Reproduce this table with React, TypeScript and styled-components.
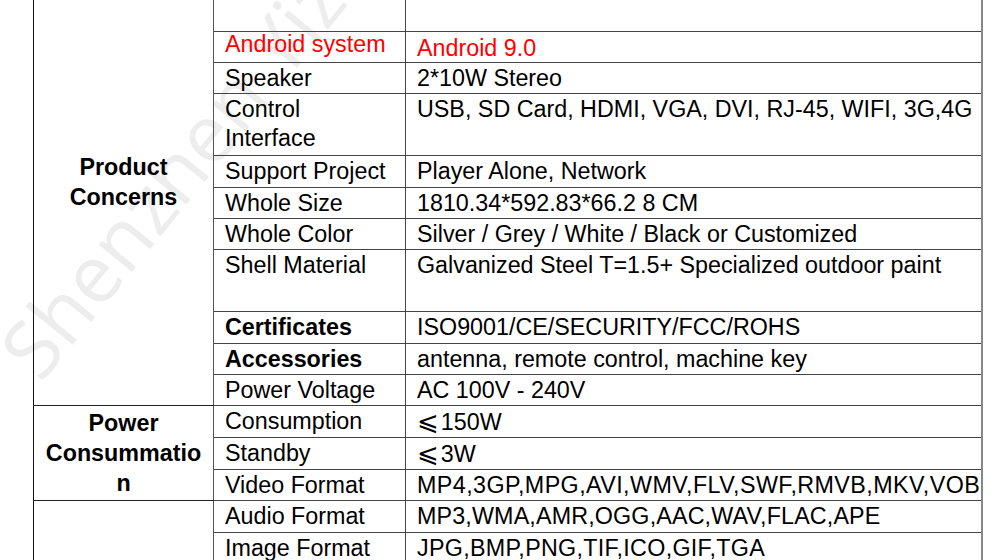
import React from "react";
import styled, { createGlobalStyle } from "styled-components";

const Global = createGlobalStyle`
  html, body { margin: 0; padding: 0; background: #fff; }
  body { width: 1000px; height: 560px; overflow: hidden; position: relative; }
`;

const Page = styled.div`
  position: relative;
  width: 1000px;
  height: 560px;
  overflow: hidden;
  background: #fff;
  font-family: "Liberation Sans", Arial, sans-serif;
`;

const Watermark = styled.div`
  position: absolute;
  left: -26px;
  top: 330px;
  transform: rotate(-51deg);
  transform-origin: 0 0;
  font-family: "Open Sans", "Liberation Sans", sans-serif;
  font-size: 80px;
  color: #ededed;
  white-space: nowrap;
  pointer-events: none;
  z-index: 0;
`;

const Table = styled.table`
  position: relative;
  z-index: 1;
  margin: -41px 0 0 33px;
  border-collapse: collapse;
  table-layout: fixed;
  width: 950px;
  font-size: 23.3px;
  line-height: 29px;
  color: #000;
  background: transparent;
`;

const Row = styled.tr<{ $h: number }>`
  height: ${(p) => p.$h}px;
`;

const GroupCell = styled.td`
  border-left: 1px solid #111;
  border-right: 1px solid #555;
  border-bottom: 1px solid #222;
  text-align: center;
  vertical-align: middle;
  font-weight: bold;
  line-height: 30px;
  padding: 0 4px;
`;

const LabelCell = styled.td<{ $bold?: boolean; $red?: boolean }>`
  border: 1px solid #444;
  border-left: 1px solid #555;
  vertical-align: top;
  padding: 1px 4px 0 11px;
  line-height: ${(p) => (p.$red ? "22px" : "29px")};
  font-weight: ${(p) => (p.$bold ? "bold" : "normal")};
  color: ${(p) => (p.$red ? "#ff0000" : "#000")};
  white-space: nowrap;
  overflow: hidden;
`;

const ValueCell = styled.td<{ $red?: boolean; $track?: number }>`
  border: 1px solid #444;
  border-right: 2px solid #888;
  vertical-align: top;
  padding: ${(p) => (p.$red ? "3px" : "1px")} 0 0 11px;
  line-height: ${(p) => (p.$red ? "27px" : "29px")};
  letter-spacing: ${(p) => p.$track ?? 0}px;
  color: ${(p) => (p.$red ? "#ff0000" : "#000")};
  white-space: nowrap;
  overflow: hidden;
`;

const Le = styled.span`
  font-family: "DejaVu Sans", sans-serif;
  font-size: 26px;
  margin-right: 2px;
`;

type Item = {
  label: React.ReactNode;
  value: React.ReactNode;
  h: number;
  bold?: boolean;
  red?: boolean;
  track?: number;
};

const product: Item[] = [
  { label: "Android system", value: "Android 9.0", h: 31, red: true },
  { label: "Speaker", value: "2*10W Stereo", h: 31 },
  { label: <>Control<br />Interface</>, value: "USB, SD Card, HDMI, VGA, DVI, RJ-45, WIFI, 3G,4G", h: 62 },
  { label: "Support Project", value: "Player Alone, Network", h: 32 },
  { label: "Whole Size", value: "1810.34*592.83*66.2 8 CM", h: 31 },
  { label: "Whole Color", value: "Silver / Grey / White / Black or Customized", h: 31 },
  { label: "Shell Material", value: "Galvanized Steel T=1.5+ Specialized outdoor paint", h: 62 },
  { label: "Certificates", value: "ISO9001/CE/SECURITY/FCC/ROHS", h: 32, bold: true },
  { label: "Accessories", value: "antenna, remote control, machine key", h: 31, bold: true },
  { label: "Power Voltage", value: "AC 100V - 240V", h: 31 },
];

const power: Item[] = [
  { label: "Consumption", value: <><Le>⩽</Le>150W</>, h: 32 },
  { label: "Standby", value: <><Le>⩽</Le>3W</>, h: 31 },
  { label: "Video Format", value: "MP4,3GP,MPG,AVI,WMV,FLV,SWF,RMVB,MKV,VOB", h: 31, track: 0.42 },
];

const media: Item[] = [
  { label: "Audio Format", value: "MP3,WMA,AMR,OGG,AAC,WAV,FLAC,APE", h: 32, track: 0.15 },
  { label: "Image Format", value: "JPG,BMP,PNG,TIF,ICO,GIF,TGA", h: 31, track: 0.3 },
  { label: "", value: "", h: 31 },
];

function Rows({ items, group, groupLabel }: { items: Item[]; group: number; groupLabel?: React.ReactNode }) {
  return (
    <>
      {items.map((it, i) => (
        <Row key={i} $h={it.h}>
          {i === 0 && group > 0 && <GroupCell rowSpan={group}>{groupLabel}</GroupCell>}
          <LabelCell $bold={it.bold} $red={it.red}>{it.label}</LabelCell>
          <ValueCell $red={it.red} $track={it.track}>{it.value}</ValueCell>
        </Row>
      ))}
    </>
  );
}

export default function App() {
  return (
    <Page>
      <Global />
      <Watermark>Shenzhen Yizhonghe Technology</Watermark>
      <Table>
        <colgroup>
          <col style={{ width: 180 }} />
          <col style={{ width: 192 }} />
          <col />
        </colgroup>
        <tbody>
          <Row $h={72}>
            <GroupCell rowSpan={product.length + 1}>Product<br />Concerns</GroupCell>
            <LabelCell />
            <ValueCell />
          </Row>
          <Rows items={product} group={0} />
          <Rows items={power} group={power.length} groupLabel={<>Power<br />Consummatio<br />n</>} />
          <Rows items={media} group={media.length} groupLabel="" />
        </tbody>
      </Table>
    </Page>
  );
}
